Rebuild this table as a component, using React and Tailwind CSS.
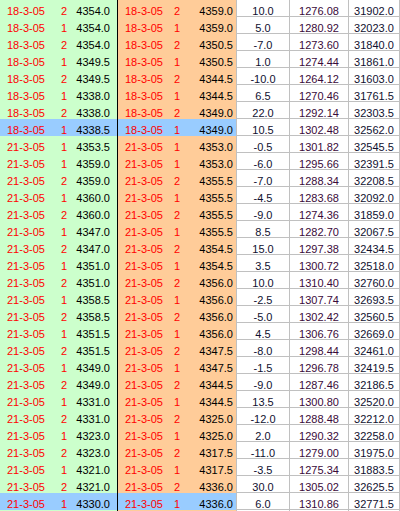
const rows = [
  ["18-3-05", 2, "4354.0", "4359.0", "10.0", "1276.08", "31902.0"],
  ["18-3-05", 1, "4354.0", "4359.0", "5.0", "1280.92", "32023.0"],
  ["18-3-05", 2, "4354.0", "4350.5", "-7.0", "1273.60", "31840.0"],
  ["18-3-05", 1, "4349.5", "4350.5", "1.0", "1274.44", "31861.0"],
  ["18-3-05", 2, "4349.5", "4344.5", "-10.0", "1264.12", "31603.0"],
  ["18-3-05", 1, "4338.0", "4344.5", "6.5", "1270.46", "31761.5"],
  ["18-3-05", 2, "4338.0", "4349.0", "22.0", "1292.14", "32303.5"],
  ["18-3-05", 1, "4338.5", "4349.0", "10.5", "1302.48", "32562.0", true],
  ["21-3-05", 1, "4353.5", "4353.0", "-0.5", "1301.82", "32545.5"],
  ["21-3-05", 1, "4359.0", "4353.0", "-6.0", "1295.66", "32391.5"],
  ["21-3-05", 2, "4359.0", "4355.5", "-7.0", "1288.34", "32208.5"],
  ["21-3-05", 1, "4360.0", "4355.5", "-4.5", "1283.68", "32092.0"],
  ["21-3-05", 2, "4360.0", "4355.5", "-9.0", "1274.36", "31859.0"],
  ["21-3-05", 1, "4347.0", "4355.5", "8.5", "1282.70", "32067.5"],
  ["21-3-05", 2, "4347.0", "4354.5", "15.0", "1297.38", "32434.5"],
  ["21-3-05", 1, "4351.0", "4354.5", "3.5", "1300.72", "32518.0"],
  ["21-3-05", 2, "4351.0", "4356.0", "10.0", "1310.40", "32760.0"],
  ["21-3-05", 1, "4358.5", "4356.0", "-2.5", "1307.74", "32693.5"],
  ["21-3-05", 2, "4358.5", "4356.0", "-5.0", "1302.42", "32560.5"],
  ["21-3-05", 1, "4351.5", "4356.0", "4.5", "1306.76", "32669.0"],
  ["21-3-05", 2, "4351.5", "4347.5", "-8.0", "1298.44", "32461.0"],
  ["21-3-05", 1, "4349.0", "4347.5", "-1.5", "1296.78", "32419.5"],
  ["21-3-05", 2, "4349.0", "4344.5", "-9.0", "1287.46", "32186.5"],
  ["21-3-05", 1, "4331.0", "4344.5", "13.5", "1300.80", "32520.0"],
  ["21-3-05", 2, "4331.0", "4325.0", "-12.0", "1288.48", "32212.0"],
  ["21-3-05", 1, "4323.0", "4325.0", "2.0", "1290.32", "32258.0"],
  ["21-3-05", 2, "4323.0", "4317.5", "-11.0", "1279.00", "31975.0"],
  ["21-3-05", 1, "4321.0", "4317.5", "-3.5", "1275.34", "31883.5"],
  ["21-3-05", 2, "4321.0", "4336.0", "30.0", "1305.02", "32625.5"],
  ["21-3-05", 1, "4330.0", "4336.0", "6.0", "1310.86", "32771.5", true],
  ["", "", "", "", "", "", ""],
];

const Row = ({ r }) => {
  const [date, qty, buy, sell, diff, pts, eq, hl] = r;
  const green = hl ? "bg-[#99ccff]" : "bg-[#ccffcc]";
  const orange = hl ? "bg-[#99ccff]" : "bg-[#ffcc99]";
  return (
    <div className="flex h-[17px] leading-[22px] whitespace-nowrap">
      <div className={`flex w-[118px] shrink-0 border-r border-black ${green}`}>
        <div className="w-[54px] pl-[7px] text-[#ff0000]">{date}</div>
        <div className="w-[20px] text-center text-[#ff0000]">{qty}</div>
        <div className="w-[43px] pr-[7px] text-right text-black">{buy}</div>
      </div>
      <div className={`flex w-[118px] shrink-0 ${orange}`}>
        <div className="w-[49px] pl-[7px] text-[#ff0000]">{date}</div>
        <div className="w-[20px] text-center text-[#ff0000]">{qty}</div>
        <div className="w-[49px] pr-[3px] text-right text-black">{sell}</div>
      </div>
      <div className="w-[54px] shrink-0 border-x border-b border-[#c0c0c0] bg-white text-center text-[#101030]">
        {diff}
      </div>
      <div className="w-[59px] shrink-0 border-r border-b border-[#c0c0c0] bg-white text-center text-[#3a0a3a]">
        {pts}
      </div>
      <div className="w-[51px] shrink-0 border-r border-b border-[#c0c0c0] bg-white text-center text-[#101030]">
        {eq}
      </div>
    </div>
  );
};

export default function App() {
  return (
    <div className="w-[400px] h-[511px] overflow-hidden bg-white font-['Liberation_Sans',Arial,sans-serif] text-[11px]">
      {rows.map((r, i) => (
        <Row key={i} r={r} />
      ))}
    </div>
  );
}
